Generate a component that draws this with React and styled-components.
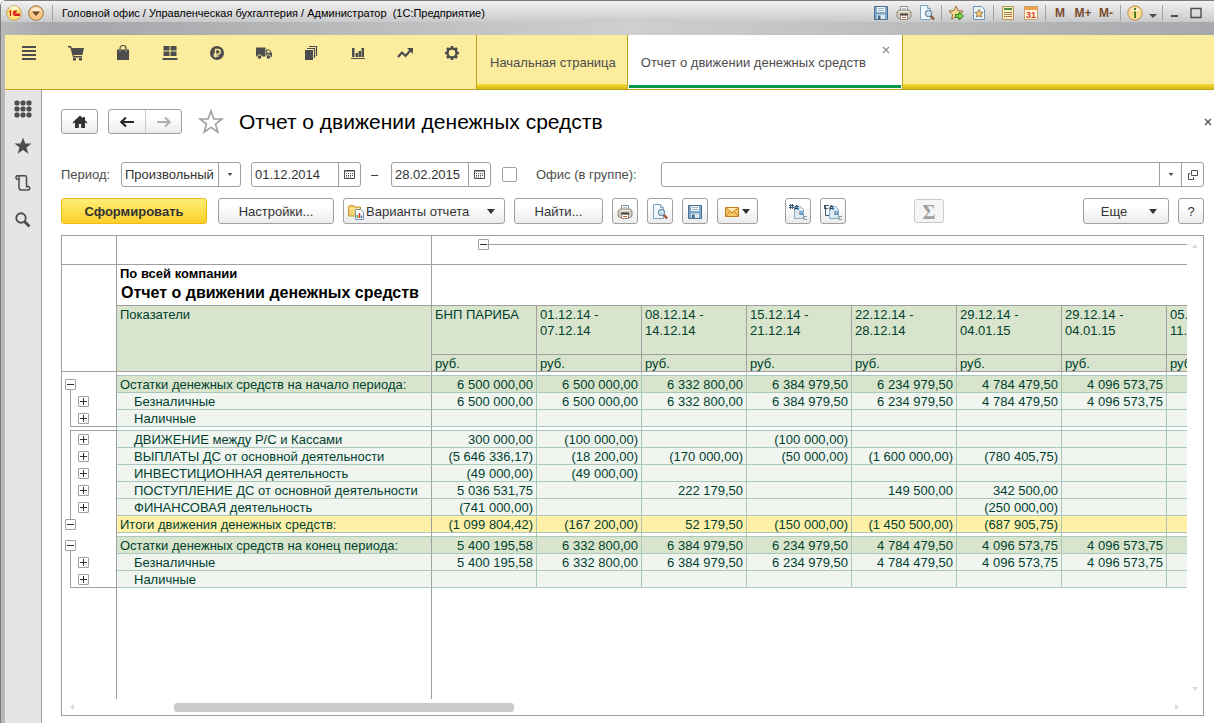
import React from 'react';
import styled, { createGlobalStyle, css } from 'styled-components';

const GlobalStyle = createGlobalStyle`
  * {
    box-sizing: border-box;
  }

  body {
    margin: 0;
    font-family: 'Liberation Sans', Arial, sans-serif;
    font-size: 13px;
    line-height: 16px;
    color: #333333;
  }

  button, input, select {
    margin: 0;
    padding: 0;
    font: inherit;
    color: inherit;
  }

  svg {
    display: block;
    flex: none;
  }
`;

const Window = styled.div`
  display: flex;
  flex-direction: column;
  height: 100vh;
  min-height: 640px;
  border-left: 1px solid #7d7b7d;
  border-top-left-radius: 6px;
  background: #ffffff;
  overflow: hidden;
`;

const TitleBar = styled.header`
  display: flex;
  align-items: center;
  flex: none;
  gap: 1px;
  height: 22px;
  padding: 3px 7px 0 5px;
  border-top: 1px solid #7d7b7d;
  background: linear-gradient(#f2f2f2, #e2e2e3 40%, #c8c9cb);
`;

const TitleText = styled.h1`
  flex: 1;
  margin: 0 0 0 6px;
  font-size: 11px;
  font-weight: 400;
  line-height: 16px;
  color: #000000;
  white-space: pre;
`;

const TitleButton = styled.button`
  display: flex;
  align-items: center;
  justify-content: center;
  width: ${(props) => props.$width || 22}px;
  height: 18px;
  border: 0;
  background: none;
  font-size: 12px;
  font-weight: 700;
  color: #7a4a2b;
`;

const Separator = styled.span`
  width: 1px;
  height: 16px;
  margin: 0 2px;
  background: #a3a3a6;
`;

const FrameStrip = styled.div`
  flex: none;
  height: 13px;
  background: linear-gradient(90deg, #b8b9bb, #a8a9ac 4%, #a8a9ac 9%, #cfcfcf 52%, #a7a8ab);
`;

const Inner = styled.div`
  display: flex;
  flex: 1;
  flex-direction: column;
  min-height: 0;
  border-left: 4px solid #b9b7b7;
`;

const Sections = styled.nav`
  display: flex;
  flex: none;
  height: 55px;
  border-bottom: 1px solid #bba41f;
  background: #fbec9e;
`;

const SectionButtons = styled.div`
  display: flex;
  width: 471px;
`;

const SectionButton = styled.button`
  display: flex;
  align-items: flex-start;
  justify-content: center;
  width: 47px;
  padding-top: 10px;
  border: 0;
  background: none;
  color: #4d4d4d;
`;

const goldEdge = css`
  background: linear-gradient(#f5dc3c, #d9b90f) bottom / 100% 5px no-repeat;
`;

const Tab = styled.a`
  display: flex;
  align-items: center;
  padding: 1px 11px 0 13px;
  border-left: 1px solid #bba41f;
  color: #4d4d4d;
  text-decoration: none;
  white-space: nowrap;
  ${goldEdge}
`;

const ActiveTab = styled.div`
  display: flex;
  padding: 0 1px 1px;
  border: 1px solid #bba41f;
  border-width: 0 1px;
  background: #ffffff;
`;

const ActiveTabInner = styled.div`
  display: flex;
  gap: 16px;
  padding: 0 11px 0 12px;
  border-bottom: 3px solid #009646;
`;

const ActiveTabLink = styled.a`
  align-self: center;
  padding-top: 5px;
  color: #4d4d4d;
  text-decoration: none;
  white-space: nowrap;
`;

const TabClose = styled.button`
  display: flex;
  align-items: center;
  justify-content: center;
  width: 8px;
  height: 8px;
  margin-top: 11px;
  border: 0;
  background: none;
  color: #8c8c8c;
`;

const TabRest = styled.div`
  flex: 1;
  ${goldEdge}
`;

const Body = styled.div`
  display: flex;
  flex: 1;
  min-height: 0;
`;

const SideBar = styled.aside`
  display: flex;
  flex-direction: column;
  align-items: center;
  flex: none;
  width: 37px;
  border-right: 1px solid #a0a0a0;
  background: #e5e5e5;
`;

const SideButton = styled.button`
  display: flex;
  align-items: center;
  justify-content: center;
  width: 36px;
  height: 37px;
  border: 0;
  background: none;
  color: #4d4d4d;
`;

const Main = styled.main`
  display: flex;
  flex: 1;
  flex-direction: column;
  min-width: 0;
  padding: 19px 10px 7px 19px;
`;

const PageHead = styled.div`
  display: flex;
  align-items: center;
  flex: none;
  height: 25px;
  margin-right: -8px;
`;

const PageTitle = styled.h2`
  flex: 1;
  margin: 0 0 0 15px;
  font-size: 21px;
  font-weight: 400;
  line-height: 24px;
  color: #000000;
`;

const PlainButton = styled.button`
  display: flex;
  align-items: center;
  justify-content: center;
  border: 0;
  background: none;
  color: #4d4d4d;
`;

const Button = styled.button`
  display: flex;
  align-items: center;
  justify-content: center;
  flex: none;
  gap: ${(props) => props.$gap || 0}px;
  width: ${(props) => props.$width || 26}px;
  height: 26px;
  padding-top: 1px;
  border: 1px solid #a0a0a0;
  border-radius: 3px;
  background: linear-gradient(#ffffff, #ffffff 30%, #ebebeb);
  color: #333333;
  white-space: nowrap;

  &:disabled {
    height: 24px;
    border-color: #c9c9c9;
    background: #f5f5f5;
    color: #a0a0a0;
  }
`;

const PrimaryButton = styled(Button)`
  margin-right: 2px;
  border-color: #edb914;
  background: linear-gradient(#ffee76, #fbd02a);
  font-weight: 700;
`;

const MenuButton = styled(Button)`
  justify-content: flex-start;
  padding-left: 4px;
`;

const MoreButton = styled(Button)`
  padding-left: 6px;
`;

const HomeButton = styled(Button)`
  height: 25px;
  padding-top: 0;
`;

const History = styled.div`
  display: flex;
  height: 25px;
  margin: 0 16px 0 10px;
  border: 1px solid #a0a0a0;
  border-radius: 3px;
  background: linear-gradient(#ffffff, #ffffff 30%, #ebebeb);
`;

const HistoryButton = styled(PlainButton)`
  width: 36px;
  color: #262626;

  & + & {
    border-left: 1px solid #c9c9c9;
    color: #b0b0b0;
  }
`;

const Filters = styled.form`
  display: flex;
  align-items: center;
  flex: none;
  margin-top: 28px;
`;

const Label = styled.label`
  flex: none;
  width: ${(props) => props.$width}px;
  color: #4d4d4d;
`;

const Field = styled.div`
  display: flex;
  width: ${(props) => (props.$width ? `${props.$width}px` : 'auto')};
  flex: ${(props) => (props.$width ? 'none' : '1')};
  height: 25px;
  margin-right: ${(props) => props.$after || 0}px;
  border: 1px solid #a0a0a0;
  border-radius: 3px;
  background: #ffffff;
  overflow: hidden;
`;

const control = css`
  flex: 1;
  min-width: 0;
  padding: 0 0 0 3px;
  border: 0;
  outline: 0;
  background: none;
  color: #333333;
`;

const Input = styled.input`
  ${control}
`;

const Select = styled.select`
  ${control}
  appearance: none;
`;

const FieldButton = styled(PlainButton)`
  flex: none;
  width: 22px;
  border-left: 1px solid #a0a0a0;
`;

const Dash = styled.span`
  width: 30px;
  padding-left: 10px;
`;

const Checkbox = styled.input`
  appearance: none;
  width: 15px;
  height: 15px;
  margin: 0 19px 0 11px;
  border: 1px solid #a0a0a0;
  border-radius: 2px;
  background: #ffffff;

  &:checked {
    background: #4d4d4d;
  }
`;

const Toolbar = styled.div`
  display: flex;
  align-items: center;
  flex: none;
  gap: 9px;
  margin-top: 11px;
`;

const Space = styled.span`
  flex: ${(props) => (props.$width ? 'none' : '1')};
  width: ${(props) => props.$width || 0}px;
`;

const Sigma = styled.span`
  font-family: 'Liberation Serif', serif;
  font-size: 20px;
  font-weight: 700;
  line-height: 22px;
`;

const Report = styled.section`
  display: flex;
  flex: 1;
  flex-direction: column;
  min-height: 0;
  margin-top: 11px;
  border: 1px solid #a0a0a0;
`;

const ReportBody = styled.div`
  display: flex;
  flex: 1;
  min-height: 0;
`;

const Sheet = styled.div`
  display: flex;
  flex: 1;
  flex-direction: column;
  min-width: 0;
  overflow: hidden;
`;

const ScrollColumn = styled.div`
  display: flex;
  flex-direction: column;
  justify-content: space-between;
  align-items: center;
  width: 16px;
  padding: 8px 0;
  color: #dcdcdc;
`;

const ScrollRow = styled.div`
  display: flex;
  align-items: center;
  flex: none;
  height: 16px;
  padding: 0 24px 0 8px;
  color: #dcdcdc;
`;

const ScrollTrack = styled.div`
  flex: 1;
  padding-left: 9%;
`;

const ScrollThumb = styled.div`
  width: 34%;
  height: 9px;
  border-radius: 3px;
  background: #cbcbcb;
`;

const Table = styled.table`
  flex: none;
  width: 1210px;
  table-layout: fixed;
  border-collapse: separate;
  border-spacing: 0;
  color: #003f2f;
`;

const OutlineCol = styled.col`
  width: 55px;
`;

const NameCol = styled.col`
  width: 315px;
`;

const Cell = styled.td`
  height: ${(props) => props.$height || 17}px;
  padding: 1px 3px 0;
  border: 0 solid #a0a0a0;
  border-width: 0 1px 1px 0;
  font-weight: 400;
  line-height: ${(props) => (props.$height > 17 ? 16 : 15)}px;
  text-align: left;
  vertical-align: top;
  white-space: pre;
`;

const HeadCell = styled(Cell)`
  background: #d8e5cc;
`;

const tones = {
  total: '#d8e5cc',
  item: '#f0f5ef',
  sum: '#fff0a8',
  gap: '#ffffff',
};

const Row = styled.tr`
  td, th {
    background: ${(props) => tones[props.$tone]};
    border-color: #a9c8bb;
  }

  th {
    border-right-color: #a0a0a0;
  }
`;

const NameCell = styled(Cell)`
  padding-left: ${(props) => (props.$indent ? 17 : 3)}px;
`;

const NumberCell = styled(Cell)`
  text-align: right;
`;

const OutlineCell = styled.td`
  && {
    padding: 0;
    border: 0;
    border-right: 1px solid #a0a0a0;
    background: #ffffff;
    vertical-align: top;
  }
`;

const Rail = styled.div`
  height: 17px;
  margin-left: 8px;
  padding: 3px 0 0 7px;
  border: 0 solid #a0a0a0;
  border-left-width: 1px;
  border-bottom-width: ${(props) => (props.$end ? 1 : 0)}px;
`;

const GapRail = styled.div`
  height: 4px;
  margin-left: 8px;
  border-bottom: ${(props) => (props.$start ? '1px solid #a0a0a0' : '0')};
`;

const Stub = styled.div`
  height: 3px;
  margin-left: 8px;
  border-left: ${(props) => (props.$line ? '1px solid #a0a0a0' : '0')};
`;

const Toggle = styled.button`
  display: block;
  width: 11px;
  height: 11px;
  margin-left: ${(props) => props.$left || 0}px;
  border: 1px solid #a0a0a0;
  border-radius: 1px;
  background: #ffffff;
  color: #333333;
`;

const GroupLine = styled.div`
  display: flex;
  align-items: center;
  padding: 2px 0 0 43px;

  &::after {
    content: '';
    flex: 1;
    height: 1px;
    background: #a0a0a0;
  }
`;

const Company = styled.div`
  font-weight: 700;
  line-height: 16px;
  color: #000000;
`;

const ReportTitle = styled.div`
  padding-left: 1px;
  font-size: 16px;
  font-weight: 700;
  line-height: 22px;
  color: #000000;
`;

const SheetRest = styled.div`
  display: grid;
  grid-template-columns: 55px 315px;
  flex: 1;

  div {
    border-right: 1px solid #a0a0a0;
  }
`;

// ---- icons ----

const Svg = ({ w = 16, h = 16, children }) => (
  <svg width={w} height={h} viewBox={`0 0 ${w} ${h}`} fill="none" aria-hidden="true">
    {children}
  </svg>
);

const Caret = ({ w = 8, h = 5 }) => (
  <svg width={w} height={h} viewBox="0 0 8 5" fill="currentColor" aria-hidden="true">
    <path d="M0 0h8L4 5z" />
  </svg>
);

const Cross = () => (
  <Svg w={8} h={8}>
    <path d="M1 1l6 6M7 1L1 7" stroke="currentColor" strokeWidth="1.2" />
  </Svg>
);

const sectionIcons = {
  'Главное': <path d="M1 1h14v2H1zM1 5h14v2H1zM1 9h14v2H1zM1 13h14v2H1z" fill="currentColor" />,
  'Продажи': (
    <path
      d="M0 1h3l1 2h12l-1.500 7H5.500l.5 1h8v1.500H5L2.300 2.500H0zM5 13h3v2.500H5zM11 13h3v2.500h-3z"
      fill="currentColor"
    />
  ),
  'Покупки': (
    <>
      <path d="M2 4.500h2.500v2h1v-2h5v2h1v-2H14V15H2z" fill="currentColor" />
      <path d="M5 6V3.500a3 3 0 0 1 6 0V6" stroke="currentColor" strokeWidth="1.200" />
    </>
  ),
  'Склад': (
    <path
      d="M1.500 1H7.500v4.500h-6zM8.500 1h6v4.500h-6zM1.500 6.500h6V11h-6zM8.500 6.500h6V11h-6zM.5 13h15v2H.5z"
      fill="currentColor"
    />
  ),
  'Деньги': (
    <>
      <circle cx="8" cy="8" r="7" fill="currentColor" />
      <path d="M6.500 12.500v-8H9a2.300 2.300 0 0 1 0 4.600H4.500M4.500 11h5" stroke="#fbec9e" strokeWidth="1.400" />
    </>
  ),
  'Доставка': (
    <>
      <path d="M0 2.500h9.500v9H0zM10.200 4.500h3.300L16 8v4h-5.800z" fill="currentColor" />
      <path d="M11.200 5.500h2l1.500 2.300h-3.500z" fill="#fbec9e" />
      <circle cx="3.500" cy="12" r="2.200" fill="currentColor" stroke="#fbec9e" strokeWidth=".8" />
      <circle cx="12.500" cy="12" r="2.200" fill="currentColor" stroke="#fbec9e" strokeWidth=".8" />
    </>
  ),
  'Документы': (
    <>
      <path d="M2 5h8v10H2z" fill="currentColor" />
      <path d="M4 3.500h7.500V13M6 1.500h7.500V11" stroke="currentColor" strokeWidth="1.200" />
    </>
  ),
  'Отчеты': (
    <path d="M2 3h2.500v9H2zM5.500 8H8v4H5.500zM8.500 6H11v6H8.500zM11.500 3H14v9h-2.500zM1 13h14v1H1z" fill="currentColor" />
  ),
  'Анализ': (
    <>
      <path d="M1 12l4-4.500L8.500 11 14 4.800" stroke="currentColor" strokeWidth="2.200" />
      <path d="M10 3h6v6z" fill="currentColor" />
    </>
  ),
  'Настройки': (
    <>
      <circle cx="8" cy="8" r="4.500" stroke="currentColor" strokeWidth="2.400" />
      <path
        d="M8 1v3M8 12v3M1 8h3M12 8h3M3 3l2 2M11 11l2 2M3 13l2-2M11 5l2-2"
        stroke="currentColor"
        strokeWidth="2.600"
      />
    </>
  ),
};

const SaveIcon = () => (
  <Svg>
    <path d="M1.500 1.500h13v13h-13z" fill="#7fa6c4" stroke="#4a7191" />
    <path d="M4 2h8v5H4z" fill="#f4f8fb" />
    <path d="M5 3.500h6M5 5.500h6" stroke="#9db4c6" />
    <path d="M4 9.500h8V14H4z" fill="#dde8ef" />
    <path d="M5 10.500h2.500V14H5z" fill="#3f6380" />
  </Svg>
);

const PrintIcon = () => (
  <Svg>
    <path d="M4.500 1.500h7v5h-7z" fill="#ffffff" stroke="#8296a8" />
    <path d="M6 3.500h4" stroke="#b7c4cf" />
    <path d="M1 7l2-2h10l2 2v5l-2 1.500H3L1 12z" fill="#d3cabd" stroke="#8f877d" />
    <path d="M3 6.500h10" stroke="#f3eee6" />
    <path d="M4 8.500h8v3H4z" fill="#4b4540" />
    <path d="M4.500 10.500h7v4h-7z" fill="#ffffff" stroke="#8f8a85" />
    <path d="M6 12.500h4" stroke="#d4572a" />
  </Svg>
);

const PreviewIcon = () => (
  <Svg>
    <path d="M1.500.5h7l3 3v11h-10z" fill="#f1f7fc" stroke="#7fa3bf" />
    <path d="M8.500.5v3h3" fill="#cfe0ec" stroke="#7fa3bf" />
    <circle cx="9.500" cy="8.500" r="3.200" fill="#c6e0f2" stroke="#5c7688" />
    <path d="M12 11l3 3.500" stroke="#95512d" strokeWidth="2.400" />
  </Svg>
);

const star = 'M8 1l2.100 4.600 5 .5-3.800 3.300 1.100 4.900L8 11.700l-4.400 2.600 1.100-4.900L.9 6.100l5-.5z';

const StarArrowIcon = () => (
  <Svg>
    <path d={star} fill="#f8d890" stroke="#96733d" />
    <path d="M7.500 9.500H11V7l4.500 4-4.500 4v-2.500H7.500z" fill="#7ed348" stroke="#2f7d1e" />
  </Svg>
);

const DocStarIcon = () => (
  <Svg>
    <path d="M2.500 1.500h8l3 3v10h-11z" fill="#eaf3fa" stroke="#6f95b2" />
    <path d="M8 4.500l1.200 2.600 2.800.3-2.100 1.900.6 2.800L8 10.700l-2.500 1.400.6-2.800L4 7.400l2.800-.3z" fill="#f8d078" stroke="#7b6336" strokeWidth=".8" />
  </Svg>
);

const CalcIcon = () => (
  <Svg>
    <path d="M2.500 1.500h11v13h-11z" fill="#fdeec4" stroke="#b9955b" />
    <path d="M4 3h8v2H4z" fill="#4c8f38" />
    <path d="M4 7.500h8M4 9.500h8M4 11.500h8" stroke="#8a5b32" strokeDasharray="1.500 .6" />
    <path d="M11 7v6" stroke="#d93a20" strokeDasharray="1 1" />
  </Svg>
);

const CalendarIcon = () => (
  <Svg>
    <path d="M1.500 1.500h13v13h-13z" fill="#fff5dc" stroke="#c5a369" />
    <path d="M2 2h12v3H2z" fill="#eda24c" />
    <text x="8" y="13" textAnchor="middle" fontSize="9" fontWeight="700" fill="#dc3c1c">31</text>
  </Svg>
);

const InfoIcon = () => (
  <Svg>
    <circle cx="8" cy="8" r="7.200" fill="#fbdc92" stroke="#c08b4c" />
    <path d="M3 6a5.400 5.400 0 0 1 10 0z" fill="#fff3cf" />
    <path d="M7 3h2v2H7zM7 6.500h2V13H7z" fill="#4b7d21" />
  </Svg>
);

const LogoIcon = () => (
  <Svg>
    <circle cx="8" cy="8" r="7.300" fill="#ffe37a" stroke="#c3a15a" />
    <path d="M3 3.800a6 6 0 0 1 10 0L8 5z" fill="#fff7cf" />
    <path d="M3 6.500L4.500 6v5M11 6.400a2.300 2.300 0 1 0-.7 3.900H14M10 8.300a1 1 0 1 0-1 .9h5" stroke="#dc1f1a" strokeWidth="1.200" />
  </Svg>
);

const MainMenuIcon = () => (
  <Svg>
    <circle cx="8" cy="8" r="7.300" fill="#f8c98a" stroke="#a97742" />
    <path d="M2.500 6a6 6 0 0 1 11 0z" fill="#fdeacb" />
    <path d="M4 6.500h8L8 11z" fill="#6b4a30" />
  </Svg>
);

const GridIcon = () => (
  <Svg w={18} h={18}>
    {[3, 9, 15].map((y) =>
      [3, 9, 15].map((x) => <rect key={`${x}-${y}`} x={x - 2.5} y={y - 2.5} width="5" height="5" rx="1.800" fill="currentColor" />)
    )}
  </Svg>
);

const FavouriteIcon = () => (
  <Svg w={18} h={18}>
    <path d="M9 .5l2.200 6h6.300l-5 3.900 1.900 6.300L9 13l-5.400 3.700 1.900-6.300-5-3.900h6.300z" fill="currentColor" />
  </Svg>
);

const HistoryIcon = () => (
  <Svg w={18} h={18}>
    <path
      d="M5 5.200H3.500A1.700 1.700 0 1 1 5 2.500V13.500A2.500 2.500 0 0 0 7.500 16H14M3.500 1.700h7.300A1.700 1.700 0 0 1 12.500 3.400V12.500M14 16a1.800 1.800 0 1 0-1.700-2.500"
      stroke="currentColor"
      strokeWidth="1.500"
    />
  </Svg>
);

const SearchIcon = () => (
  <Svg w={18} h={18}>
    <circle cx="7" cy="7" r="4.700" stroke="currentColor" strokeWidth="1.900" />
    <path d="M10.500 10.500l5 5" stroke="currentColor" strokeWidth="3" />
  </Svg>
);

const HomeIcon = () => (
  <Svg>
    <path d="M8 1.500L.5 8.500l1 1L3 8.300V14h3.800v-4h2.400v4H13V8.300l1.500 1.200 1-1L13 6.200V3h-2v1.300z" fill="currentColor" />
  </Svg>
);

const Arrow = ({ flip }) => (
  <Svg w={14} h={12}>
    <path
      d={flip ? 'M0 6h12M8 1.500L12.700 6 8 10.500' : 'M14 6H2M6 1.500L1.300 6 6 10.500'}
      stroke="currentColor"
      strokeWidth="2"
    />
  </Svg>
);

const BigStar = () => (
  <Svg w={26} h={26}>
    <path d="M13 2l2.900 8h8.100l-6.500 5 2.300 8L13 18.400 6.200 23l2.300-8L2 10h8.100z" stroke="#a0a0a0" strokeWidth="1.600" />
  </Svg>
);

const DateIcon = () => (
  <Svg w={12} h={11}>
    <path d="M.5 1.500h10v8H.5z" stroke="currentColor" />
    <path d="M1 2.500h9" stroke="#a0a0a0" />
    <path d="M2 4.500h7M2 6.500h7" stroke="currentColor" strokeDasharray="1 1" />
    <path d="M2 8h5" stroke="currentColor" strokeDasharray="1 1" />
  </Svg>
);

const OpenIcon = () => (
  <Svg w={10} h={10}>
    <path d="M3.500.5h6v5h-6zM2 3.500H.5v6h5V7" stroke="currentColor" />
  </Svg>
);

const FolderIcon = () => (
  <Svg>
    <path d="M.5 2.500l1-1h4l1 1.500h6v9H.5z" fill="#f6d272" stroke="#c09433" />
    <path d="M1 5h11" stroke="#fff0b5" />
    <path d="M7.500 5.500h5l3 2.500v7.500h-8z" fill="#ffffff" stroke="#7193b0" />
    <path d="M9.500 14v-3" stroke="#4f9c3b" strokeWidth="1.500" />
    <path d="M11.500 14V9" stroke="#da3b22" strokeWidth="1.500" />
    <path d="M13.500 14v-2.500" stroke="#3e75bc" strokeWidth="1.500" />
  </Svg>
);

const MailIcon = () => (
  <Svg w={14} h={10}>
    <path d="M.5.5h13v9H.5z" fill="#f8c765" stroke="#bd821d" />
    <path d="M.5.500L7 6 13.500.5M.5 9.500L5 4.500M13.500 9.500L9 4.500" stroke="#bd821d" />
    <path d="M1.800 1h10.400L7 5z" fill="#ffe7a9" />
  </Svg>
);

const LevelsIcon = ({ open }) => (
  <Svg w={18} h={16}>
    <path d="M5.500 2.500h6l3 3v9h-9z" fill="#dcebf5" stroke="#88acc6" />
    {open ? (
      <path d="M0 1.500h5M0 4.500h4M1.500 2v9.500H5M.5 1v4" stroke="#3f5568" />
    ) : (
      <path d="M0 1.500h5M0 3.500h5M1.500 0v5M3.500 0v5" stroke="#3f5568" />
    )}
    <text x="5" y="6" fontSize="7" fontWeight="700" fill="#163f63">A</text>
    <text x="10" y="11" fontSize="6" fontWeight="700" fill="#3d7099">B</text>
    <text x="14" y="16" fontSize="6" fontWeight="700" fill="#6f7c86">C</text>
  </Svg>
);

const ToggleButton = ({ open, left, name }) => (
  <Toggle type="button" $left={left} aria-label={`${open ? 'Свернуть' : 'Развернуть'} ${name}`}>
    <Svg w={9} h={9}>
      <path d={open ? 'M1 4.500h7' : 'M1 4.500h7M4.500 1v7'} stroke="currentColor" />
    </Svg>
  </Toggle>
);

// ---- data ----

const columns = [
  'БНП ПАРИБА',
  '01.12.14 -\n07.12.14',
  '08.12.14 -\n14.12.14',
  '15.12.14 -\n21.12.14',
  '22.12.14 -\n28.12.14',
  '29.12.14 -\n04.01.15',
  '29.12.14 -\n04.01.15',
  '05.01.15 -\n11.01.15',
];

const opening = ['6 500 000,00', '6 500 000,00', '6 332 800,00', '6 384 979,50', '6 234 979,50', '4 784 479,50', '4 096 573,75'];
const closing = ['5 400 195,58', '6 332 800,00', '6 384 979,50', '6 234 979,50', '4 784 479,50', '4 096 573,75', '4 096 573,75'];

const rows = [
  { tone: 'gap' },
  { tone: 'total', name: 'Остатки денежных средств на начало периода:', values: opening },
  { tone: 'item', name: 'Безналичные', values: opening },
  { tone: 'item', name: 'Наличные', values: [], end: true },
  { tone: 'gap', start: true },
  { tone: 'item', name: 'ДВИЖЕНИЕ между Р/С и Кассами', values: ['300 000,00', '(100 000,00)', '', '(100 000,00)'] },
  {
    tone: 'item',
    name: 'ВЫПЛАТЫ ДС от основной деятельности',
    values: ['(5 646 336,17)', '(18 200,00)', '(170 000,00)', '(50 000,00)', '(1 600 000,00)', '(780 405,75)'],
  },
  { tone: 'item', name: 'ИНВЕСТИЦИОННАЯ деятельность', values: ['(49 000,00)', '(49 000,00)'] },
  {
    tone: 'item',
    name: 'ПОСТУПЛЕНИЕ ДС от основной деятельности',
    values: ['5 036 531,75', '', '222 179,50', '', '149 500,00', '342 500,00'],
  },
  { tone: 'item', name: 'ФИНАНСОВАЯ деятельность', values: ['(741 000,00)', '', '', '', '', '(250 000,00)'] },
  {
    tone: 'sum',
    name: 'Итоги движения денежных средств:',
    values: ['(1 099 804,42)', '(167 200,00)', '52 179,50', '(150 000,00)', '(1 450 500,00)', '(687 905,75)'],
  },
  { tone: 'gap' },
  { tone: 'total', name: 'Остатки денежных средств на конец периода:', values: closing },
  { tone: 'item', name: 'Безналичные', values: closing },
  { tone: 'item', name: 'Наличные', values: [], end: true },
];

const OutlineMark = ({ row }) => {
  if (row.tone === 'gap') return <GapRail $start={row.start} />;
  if (row.tone === 'item') {
    return (
      <Rail $end={row.end}>
        <ToggleButton name={row.name} />
      </Rail>
    );
  }
  // the sum row closes its group from below, so its line runs upwards
  return (
    <>
      <Stub $line={row.tone === 'sum'} />
      <ToggleButton open left={3} name={row.name} />
      <Stub $line={row.tone === 'total'} />
    </>
  );
};

const ReportTable = () => (
  <Table>
    <colgroup>
      <OutlineCol />
      <NameCol />
      <col span={8} />
    </colgroup>
    <thead>
      <tr>
        <Cell $height={29} />
        <Cell />
        <Cell colSpan={8}>
          <GroupLine>
            <ToggleButton open name="периоды" />
          </GroupLine>
        </Cell>
      </tr>
      <tr>
        <Cell rowSpan={3} />
        <Cell $height={41}>
          <Company>По всей компании</Company>
          <ReportTitle>Отчет о движении денежных средств</ReportTitle>
        </Cell>
        <Cell colSpan={8} />
      </tr>
      <tr>
        <HeadCell as="th" scope="col" rowSpan={2} $height={66}>Показатели</HeadCell>
        {columns.map((name, i) => (
          <HeadCell as="th" scope="col" key={i} $height={49}>{name}</HeadCell>
        ))}
      </tr>
      <tr>
        {columns.map((_, i) => (
          <HeadCell key={i}>руб.</HeadCell>
        ))}
      </tr>
    </thead>
    <tbody>
      {rows.map((row, i) => {
        const height = row.tone === 'gap' ? 4 : 17;
        return (
          <Row key={i} $tone={row.tone}>
            <OutlineCell>
              <OutlineMark row={row} />
            </OutlineCell>
            <NameCell as="th" scope="row" $indent={row.tone === 'item'} $height={height}>{row.name}</NameCell>
            {columns.map((_, c) => (
              <NumberCell key={c} $height={height}>{row.values ? row.values[c] : null}</NumberCell>
            ))}
          </Row>
        );
      })}
    </tbody>
  </Table>
);

const App = () => (
  <Window>
    <GlobalStyle />
    <TitleBar>
      <TitleButton type="button" $width={16} aria-label="1С"><LogoIcon /></TitleButton>
      <TitleButton type="button" $width={26} aria-label="Главное меню"><MainMenuIcon /></TitleButton>
      <Separator />
      <TitleText>Головной офис / Управленческая бухгалтерия / Администратор  (1С:Предприятие)</TitleText>
      <TitleButton type="button" aria-label="Сохранить"><SaveIcon /></TitleButton>
      <TitleButton type="button" aria-label="Печать"><PrintIcon /></TitleButton>
      <TitleButton type="button" aria-label="Предварительный просмотр"><PreviewIcon /></TitleButton>
      <Separator />
      <TitleButton type="button" aria-label="Добавить в избранное"><StarArrowIcon /></TitleButton>
      <TitleButton type="button" aria-label="Избранное"><DocStarIcon /></TitleButton>
      <Separator />
      <TitleButton type="button" aria-label="Калькулятор"><CalcIcon /></TitleButton>
      <TitleButton type="button" aria-label="Календарь"><CalendarIcon /></TitleButton>
      <Separator />
      <TitleButton type="button">M</TitleButton>
      <TitleButton type="button">M+</TitleButton>
      <TitleButton type="button">M-</TitleButton>
      <Separator />
      <TitleButton type="button" aria-label="О программе"><InfoIcon /></TitleButton>
      <TitleButton type="button" $width={12} aria-label="Еще команды">
        <Svg w={8} h={12}><path d="M0 7h8l-4 4z" fill="#4d4d4d" /></Svg>
      </TitleButton>
      <Separator />
      <TitleButton type="button" $width={18} aria-label="Свернуть">
        <Svg w={8} h={12}><path d="M0 9h7" stroke="#4d4d4d" strokeWidth="2" /></Svg>
      </TitleButton>
      <TitleButton type="button" aria-label="Развернуть">
        <Svg w={12} h={12}><path d="M1 1.500h10v9H1z" stroke="#4d4d4d" strokeWidth="1.400" /></Svg>
      </TitleButton>
    </TitleBar>
    <FrameStrip />
    <Inner>
      <Sections>
        <SectionButtons>
          {Object.entries(sectionIcons).map(([name, icon]) => (
            <SectionButton type="button" key={name} aria-label={name}><Svg>{icon}</Svg></SectionButton>
          ))}
        </SectionButtons>
        <Tab href="#home">Начальная страница</Tab>
        <ActiveTab>
          <ActiveTabInner>
            <ActiveTabLink href="#report">Отчет о движении денежных средств</ActiveTabLink>
            <TabClose type="button" aria-label="Закрыть вкладку"><Cross /></TabClose>
          </ActiveTabInner>
        </ActiveTab>
        <TabRest />
      </Sections>
      <Body>
        <SideBar>
          <SideButton type="button" aria-label="Меню функций"><GridIcon /></SideButton>
          <SideButton type="button" aria-label="Избранное"><FavouriteIcon /></SideButton>
          <SideButton type="button" aria-label="История"><HistoryIcon /></SideButton>
          <SideButton type="button" aria-label="Поиск"><SearchIcon /></SideButton>
        </SideBar>
        <Main>
          <PageHead>
            <HomeButton type="button" $width={37} aria-label="Начальная страница"><HomeIcon /></HomeButton>
            <History>
              <HistoryButton type="button" aria-label="Назад"><Arrow /></HistoryButton>
              <HistoryButton type="button" aria-label="Вперед"><Arrow flip /></HistoryButton>
            </History>
            <PlainButton type="button" aria-label="В избранное"><BigStar /></PlainButton>
            <PageTitle>Отчет о движении денежных средств</PageTitle>
            <PlainButton type="button" aria-label="Закрыть"><Cross /></PlainButton>
          </PageHead>
          <Filters>
            <Label htmlFor="period" $width={60}>Период:</Label>
            <Field $width={120} $after={10}>
              <Select id="period" defaultValue="custom">
                <option value="custom">Произвольный</option>
              </Select>
              <FieldButton type="button" aria-label="Выбрать период"><Caret w={6} h={3} /></FieldButton>
            </Field>
            <Field $width={110}>
              <Input aria-label="Начало периода" defaultValue="01.12.2014" />
              <FieldButton type="button" aria-label="Выбрать начало"><DateIcon /></FieldButton>
            </Field>
            <Dash>–</Dash>
            <Field $width={100}>
              <Input aria-label="Конец периода" defaultValue="28.02.2015" />
              <FieldButton type="button" aria-label="Выбрать конец"><DateIcon /></FieldButton>
            </Field>
            <Checkbox type="checkbox" aria-label="Отбор по офису" />
            <Label htmlFor="office" $width={125}>Офис (в группе):</Label>
            <Field>
              <Input id="office" />
              <FieldButton type="button" aria-label="Список офисов"><Caret w={6} h={3} /></FieldButton>
              <FieldButton type="button" aria-label="Открыть"><OpenIcon /></FieldButton>
            </Field>
          </Filters>
          <Toolbar>
            <PrimaryButton type="button" $width={146}>Сформировать</PrimaryButton>
            <Button type="button" $width={116}>Настройки...</Button>
            <MenuButton type="button" $width={162} $gap={2}>
              <FolderIcon />
              Варианты отчета
              <Space $width={14} />
              <Caret />
            </MenuButton>
            <Button type="button" $width={89}>Найти...</Button>
            <Button type="button" aria-label="Печать"><PrintIcon /></Button>
            <Button type="button" aria-label="Предварительный просмотр"><PreviewIcon /></Button>
            <Button type="button" aria-label="Сохранить"><SaveIcon /></Button>
            <Button type="button" $width={41} $gap={3} aria-label="Отправить"><MailIcon /><Caret /></Button>
            <Space $width={9} />
            <Button type="button" aria-label="Развернуть группы"><LevelsIcon /></Button>
            <Button type="button" aria-label="Свернуть группы"><LevelsIcon open /></Button>
            <Space $width={50} />
            <Button type="button" $width={30} disabled><Sigma>Σ</Sigma></Button>
            <Space />
            <MoreButton type="button" $width={86} $gap={22}>Еще <Caret /></MoreButton>
            <Button type="button">?</Button>
          </Toolbar>
          <Report>
            <ReportBody>
              <Sheet>
                <ReportTable />
                <SheetRest>
                  <div />
                  <div />
                </SheetRest>
              </Sheet>
              <ScrollColumn>
                <Svg w={6} h={4}><path d="M3 0l3 4H0z" fill="currentColor" /></Svg>
                <Svg w={6} h={4}><path d="M0 0h6L3 4z" fill="currentColor" /></Svg>
              </ScrollColumn>
            </ReportBody>
            <ScrollRow>
              <Svg w={4} h={6}><path d="M4 0v6L0 3z" fill="currentColor" /></Svg>
              <ScrollTrack>
                <ScrollThumb />
              </ScrollTrack>
              <Svg w={4} h={6}><path d="M0 0v6l4-3z" fill="currentColor" /></Svg>
            </ScrollRow>
          </Report>
        </Main>
      </Body>
    </Inner>
  </Window>
);

export default App;
